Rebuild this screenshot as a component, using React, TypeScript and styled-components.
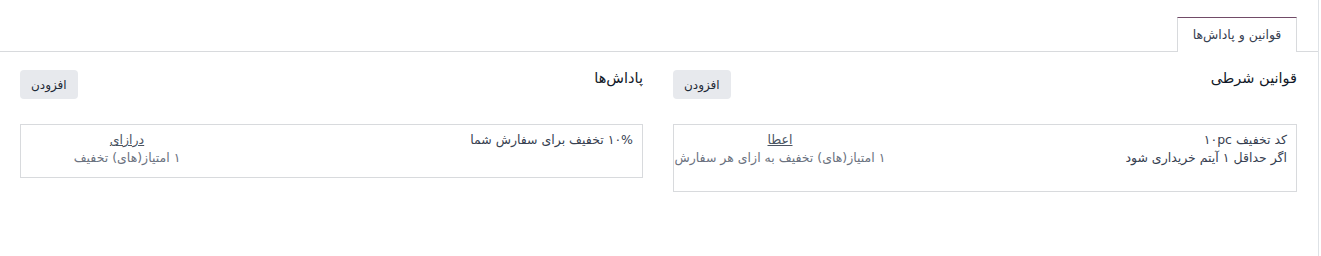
import React from "react";
import styled, { createGlobalStyle } from "styled-components";

const GlobalStyle = createGlobalStyle`
  html, body {
    margin: 0;
    padding: 0;
    background: #ffffff;
  }
  body {
    font-family: "DejaVu Sans", "Noto Sans", sans-serif;
    font-size: 13px;
    color: #374151;
  }
`;

const Sheet = styled.div`
  direction: rtl;
  width: 1319px;
  height: 256px;
  box-sizing: border-box;
  border-right: 1px solid #dee2e6;
  background: #fff;
`;

const TabBar = styled.div`
  display: flex;
  padding: 17px 21px 0 0;
  border-bottom: 1px solid #d8dadd;
  height: 52px;
  box-sizing: border-box;
`;

const Tab = styled.div`
  width: 120px;
  height: 35px;
  box-sizing: border-box;
  display: flex;
  align-items: center;
  justify-content: center;
  background: #fff;
  border: 1px solid #d8dadd;
  border-top-color: #714b67;
  border-bottom: none;
  color: #374151;
  font-size: 12.5px;
  padding-bottom: 2px;
`;

const Columns = styled.div`
  display: grid;
  grid-template-columns: 624px 623px;
  column-gap: 30px;
  padding: 16px 21px 0 20px;
`;

const Column = styled.section`
  display: flex;
  flex-direction: column;
`;

const Header = styled.div`
  display: flex;
  justify-content: space-between;
  align-items: flex-start;
  height: 56px;
`;

const Title = styled.h3`
  margin: 0;
  font-size: 14.5px;
  font-weight: 500;
  color: #111827;
  line-height: 20px;
`;

const AddButton = styled.button`
  margin-top: 2px;
  height: 29px;
  padding: 0 11px;
  border: none;
  border-radius: 4px;
  background: #e7e9ed;
  color: #1f2937;
  font-family: inherit;
  font-size: 12px;
  font-weight: 500;
`;

const Card = styled.div<{ $minHeight: number }>`
  display: flex;
  justify-content: space-between;
  min-height: ${(p) => p.$minHeight}px;
  box-sizing: border-box;
  border: 1px solid #d8dadd;
  padding: 6px 9px 8px 8px;
  font-size: 12.5px;
  line-height: 18px;
`;

const Main = styled.div`
  display: flex;
  flex-direction: column;
  color: #374151;
`;

const Side = styled.div`
  width: 196px;
  flex-shrink: 0;
  display: flex;
  flex-direction: column;
  align-items: center;
  text-align: center;
  white-space: nowrap;
  color: #6b7280;
`;

const SideLink = styled.a`
  color: #4b5563;
  text-decoration: underline;
  cursor: pointer;
`;

export default function App() {
  return (
    <>
      <GlobalStyle />
      <Sheet>
        <TabBar>
          <Tab>قوانین و پاداش‌ها</Tab>
        </TabBar>
        <Columns>
          <Column>
            <Header>
              <Title>قوانین شرطی</Title>
              <AddButton>افزودن</AddButton>
            </Header>
            <Card $minHeight={68}>
              <Main>
                <span>کد تخفیف ۱۰pc</span>
                <span>اگر حداقل ۱ آیتم خریداری شود</span>
              </Main>
              <Side>
                <SideLink>اعطا</SideLink>
                <span>۱ امتیاز(های) تخفیف به ازای هر سفارش</span>
              </Side>
            </Card>
          </Column>
          <Column>
            <Header>
              <Title>پاداش‌ها</Title>
              <AddButton>افزودن</AddButton>
            </Header>
            <Card $minHeight={54}>
              <Main>
                <span>۱۰% تخفیف برای سفارش شما</span>
              </Main>
              <Side>
                <SideLink>درازای</SideLink>
                <span>۱ امتیاز(های) تخفیف</span>
              </Side>
            </Card>
          </Column>
        </Columns>
      </Sheet>
    </>
  );
}
